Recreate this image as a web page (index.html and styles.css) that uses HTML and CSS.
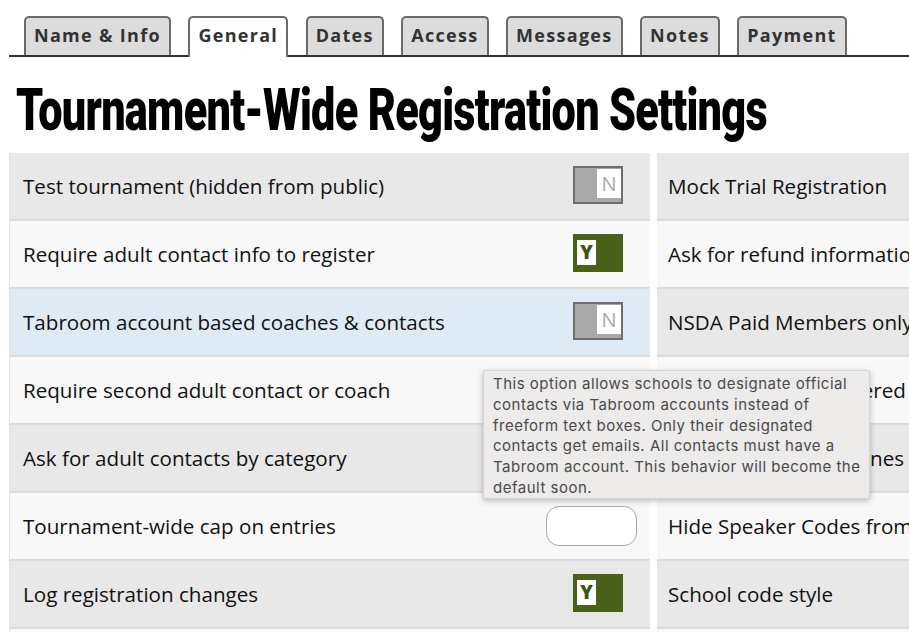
FILE: index.html
```html
<!DOCTYPE html>
<html lang="en">
<head>
    <meta charset="UTF-8">
    <title>Tournament-Wide Registration Settings</title>
    <link rel="stylesheet" href="styles.css">
</head>
<body>
<div class="page">
    <ul class="tabs">
        <li class="tab">Name &amp; Info</li>
        <li class="tab selected">General</li>
        <li class="tab">Dates</li>
        <li class="tab">Access</li>
        <li class="tab">Messages</li>
        <li class="tab">Notes</li>
        <li class="tab">Payment</li>
    </ul>

    <h2 class="title">Tournament-Wide Registration Settings</h2>

    <div class="settings">
        <div class="column left">
            <div class="row">
                <span class="label">Test tournament (hidden from public)</span>
                <span class="toggle off"><span class="knob">N</span></span>
            </div>
            <div class="row">
                <span class="label">Require adult contact info to register</span>
                <span class="toggle on"><span class="knob">Y</span></span>
            </div>
            <div class="row hover">
                <span class="label">Tabroom account based coaches &amp; contacts</span>
                <span class="toggle off"><span class="knob">N</span></span>
            </div>
            <div class="row">
                <span class="label">Require second adult contact or coach</span>
                <span class="toggle off"><span class="knob">N</span></span>
            </div>
            <div class="row">
                <span class="label">Ask for adult contacts by category</span>
                <span class="toggle off"><span class="knob">N</span></span>
            </div>
            <div class="row">
                <span class="label">Tournament-wide cap on entries</span>
                <input class="number" type="text" value="">
            </div>
            <div class="row">
                <span class="label">Log registration changes</span>
                <span class="toggle on"><span class="knob">Y</span></span>
            </div>
            <div class="row">
                <span class="label">Require entry confirmation</span>
            </div>
        </div>

        <div class="column right">
            <div class="row"><span class="label">Mock Trial Registration</span></div>
            <div class="row"><span class="label">Ask for refund information</span></div>
            <div class="row"><span class="label">NSDA Paid Members only</span></div>
            <div class="row"><span class="label">Require NSDA registered students</span></div>
            <div class="row"><span class="label">Publish school deadlines</span></div>
            <div class="row"><span class="label">Hide Speaker Codes from entries</span></div>
            <div class="row"><span class="label">School code style</span></div>
            <div class="row"><span class="label">Judge registration</span></div>
        </div>
    </div>
</div>

<div class="tooltip">
    This option allows schools to designate official contacts via Tabroom accounts instead of freeform text boxes. Only their designated contacts get emails. All contacts must have a Tabroom account. This behavior will become the default soon.
</div>
</body>
</html>
```

FILE: styles.css
```css
html, body {
    margin: 0;
    padding: 0;
    overflow: hidden;
    background: #fff;
}

.page {
    width: 909px;
    height: 632px;
    overflow: hidden;
    font-family: "Open Sans", "Noto Sans", sans-serif;
    color: #111;
}

.tabs {
    display: flex;
    gap: 17.5px;
    list-style: none;
    margin: 16px 0 0 9px;
    padding: 0 0 0 15px;
    border-bottom: 2px solid #333;
    height: 39px;
}

.tab {
    box-sizing: border-box;
    height: 39px;
    padding: 5px 8px 0 8px;
    background: #dcdcdc;
    border: 2px solid #6a6a6a;
    border-bottom: none;
    border-radius: 5px 5px 0 0;
    font-weight: 700;
    font-size: 18px;
    letter-spacing: 1.3px;
    color: #333;
}

.tab.selected {
    background: #fff;
    height: 41px;
}

/* headline face is an extra-condensed bold; squeeze Roboto to match */
.title {
    font-family: "Roboto", sans-serif;
    font-weight: 900;
    font-size: 60px;
    letter-spacing: -1px;
    line-height: 66px;
    color: #000;
    margin: 20px 0 10px 16px;
    white-space: nowrap;
    transform: scaleX(0.721);
    transform-origin: left center;
}

.settings {
    display: flex;
    gap: 7px;
    margin-left: 9px;
}

.column {
    flex: none;
    width: 640px;
}

.column.left {
    border-left: 1px solid #e2e2e2;
}

.row {
    box-sizing: border-box;
    height: 68px;
    display: flex;
    align-items: center;
    justify-content: space-between;
    padding: 0 27px 0 13px;
    background: #f8f8f8;
    border-bottom: 2px solid #dcdcdc;
    font-size: 20.6px;
    white-space: nowrap;
}

.row:nth-child(odd) {
    background: #e8e8e8;
}

.row.hover {
    background: #dfebf4;
}

.column.right .row {
    padding-left: 11px;
}

.toggle {
    box-sizing: border-box;
    display: flex;
    width: 50px;
    height: 38px;
    margin-top: -3px;
    border: 2px solid #6e6e6e;
    font-family: "Open Sans", sans-serif;
}

.toggle.off {
    background: #a9a9a9;
    justify-content: flex-end;
    align-items: flex-start;
    padding: 1px 0 0 0;
}

.toggle.off .knob {
    width: 24px;
    height: 29px;
    background: #fff;
    color: #aaa;
    font-size: 20px;
    line-height: 29px;
    text-align: center;
}

.toggle.on {
    background: #4a6218;
    border-color: #4a6218;
    align-items: center;
    padding: 0 0 0 2px;
}

.toggle.on .knob {
    width: 19px;
    height: 25px;
    background: #fff;
    color: #3d5412;
    font-weight: 800;
    font-size: 19px;
    line-height: 25px;
    text-align: center;
}

.number {
    box-sizing: border-box;
    width: 91px;
    height: 40px;
    margin-right: -14px;
    border: 1px solid #a8a8a8;
    border-radius: 13px;
    background: #fff;
}

.tooltip {
    position: absolute;
    left: 483px;
    top: 370px;
    box-sizing: border-box;
    width: 387px;
    height: 129px;
    padding: 3px 1px 0 9px;
    background: #ecebea;
    border: 1px solid #d4d4d4;
    box-shadow: 0 2px 6px rgba(0, 0, 0, 0.25);
    font-family: "Inter", "Liberation Sans", sans-serif;
    font-size: 15px;
    letter-spacing: 0.5px;
    line-height: 20.8px;
    color: #4a4a4a;
}
```
